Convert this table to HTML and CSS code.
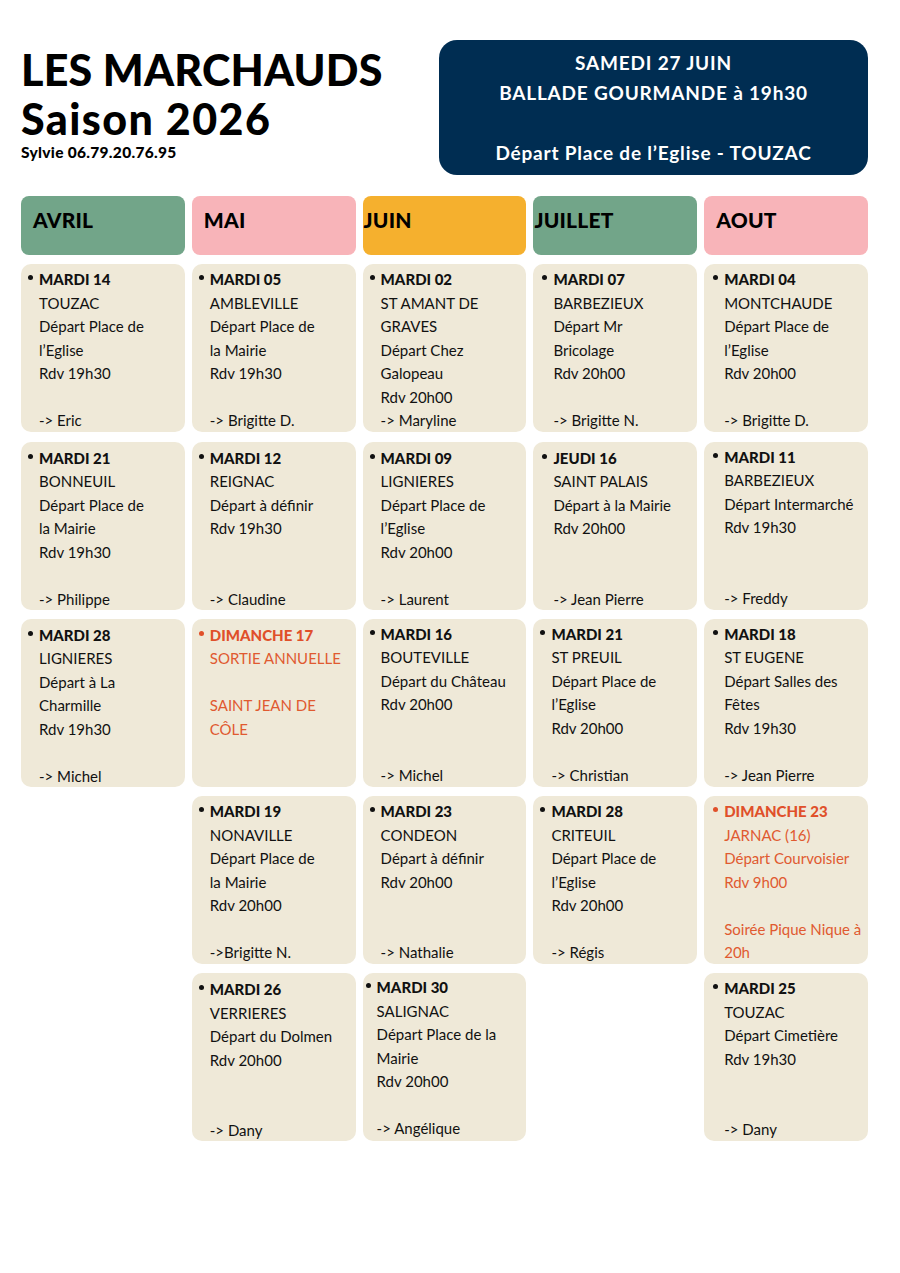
FILE: index.html
```html
<!DOCTYPE html>
<html lang="fr">
<head>
<meta charset="utf-8">
<title>Les Marchauds – Saison 2026</title>
<link rel="stylesheet" href="styles.css">
</head>
<body>
<div class="page">
  <header class="top">
    <div class="brand">
      <h1 class="title">LES MARCHAUDS<br><span class="season">Saison 2026</span></h1>
      <p class="contact">Sylvie 06.79.20.76.95</p>
    </div>
    <div class="promo">
      <p>SAMEDI 27 JUIN</p>
      <p>BALLADE GOURMANDE à 19h30</p>
      <p>&nbsp;</p>
      <p>Départ Place de l’Eglise - TOUZAC</p>
    </div>
  </header>

  <main class="grid">
    <div class="month green">AVRIL</div>
    <div class="month pink">MAI</div>
    <div class="month orange flush">JUIN</div>
    <div class="month green flush">JUILLET</div>
    <div class="month pink">AOUT</div>

    <!-- row 1 -->
    <div class="card"><p class="day">MARDI 14</p><p>TOUZAC</p><p>Départ Place de</p><p>l’Eglise</p><p>Rdv 19h30</p><p>&nbsp;</p><p>-&gt; Eric</p></div>
    <div class="card"><p class="day">MARDI 05</p><p>AMBLEVILLE</p><p>Départ Place de</p><p>la Mairie</p><p>Rdv 19h30</p><p>&nbsp;</p><p>-&gt; Brigitte D.</p></div>
    <div class="card"><p class="day">MARDI 02</p><p>ST AMANT DE</p><p>GRAVES</p><p>Départ Chez</p><p>Galopeau</p><p>Rdv 20h00</p><p>-&gt; Maryline</p></div>
    <div class="card wide"><p class="day">MARDI 07</p><p>BARBEZIEUX</p><p>Départ Mr</p><p>Bricolage</p><p>Rdv 20h00</p><p>&nbsp;</p><p>-&gt; Brigitte N.</p></div>
    <div class="card wide"><p class="day">MARDI 04</p><p>MONTCHAUDE</p><p>Départ Place de</p><p>l’Eglise</p><p>Rdv 20h00</p><p>&nbsp;</p><p>-&gt; Brigitte D.</p></div>

    <!-- row 2 -->
    <div class="card lower"><p class="day">MARDI 21</p><p>BONNEUIL</p><p>Départ Place de</p><p>la Mairie</p><p>Rdv 19h30</p><p>&nbsp;</p><p>-&gt; Philippe</p></div>
    <div class="card lower"><p class="day">MARDI 12</p><p>REIGNAC</p><p>Départ à définir</p><p>Rdv 19h30</p><p>&nbsp;</p><p>&nbsp;</p><p>-&gt; Claudine</p></div>
    <div class="card lower"><p class="day">MARDI 09</p><p>LIGNIERES</p><p>Départ Place de</p><p>l’Eglise</p><p>Rdv 20h00</p><p>&nbsp;</p><p>-&gt; Laurent</p></div>
    <div class="card lower wide"><p class="day">JEUDI 16</p><p>SAINT PALAIS</p><p>Départ à la Mairie</p><p>Rdv 20h00</p><p>&nbsp;</p><p>&nbsp;</p><p>-&gt; Jean Pierre</p></div>
    <div class="card wide"><p class="day">MARDI 11</p><p>BARBEZIEUX</p><p>Départ Intermarché</p><p>Rdv 19h30</p><p>&nbsp;</p><p>&nbsp;</p><p>-&gt; Freddy</p></div>

    <!-- row 3 -->
    <div class="card lower"><p class="day">MARDI 28</p><p>LIGNIERES</p><p>Départ à La</p><p>Charmille</p><p>Rdv 19h30</p><p>&nbsp;</p><p>-&gt; Michel</p></div>
    <div class="card lower special"><p class="day">DIMANCHE 17</p><p>SORTIE ANNUELLE</p><p>&nbsp;</p><p>SAINT JEAN DE</p><p>CÔLE</p></div>
    <div class="card"><p class="day">MARDI 16</p><p>BOUTEVILLE</p><p>Départ du Château</p><p>Rdv 20h00</p><p>&nbsp;</p><p>&nbsp;</p><p>-&gt; Michel</p></div>
    <div class="card"><p class="day">MARDI 21</p><p>ST PREUIL</p><p>Départ Place de</p><p>l’Eglise</p><p>Rdv 20h00</p><p>&nbsp;</p><p>-&gt; Christian</p></div>
    <div class="card wide"><p class="day">MARDI 18</p><p>ST EUGENE</p><p>Départ Salles des</p><p>Fêtes</p><p>Rdv 19h30</p><p>&nbsp;</p><p>-&gt; Jean Pierre</p></div>

    <!-- row 4 -->
    <div class="empty"></div>
    <div class="card"><p class="day">MARDI 19</p><p>NONAVILLE</p><p>Départ Place de</p><p>la Mairie</p><p>Rdv 20h00</p><p>&nbsp;</p><p>-&gt;Brigitte N.</p></div>
    <div class="card"><p class="day">MARDI 23</p><p>CONDEON</p><p>Départ à définir</p><p>Rdv 20h00</p><p>&nbsp;</p><p>&nbsp;</p><p>-&gt; Nathalie</p></div>
    <div class="card"><p class="day">MARDI 28</p><p>CRITEUIL</p><p>Départ Place de</p><p>l’Eglise</p><p>Rdv 20h00</p><p>&nbsp;</p><p>-&gt; Régis</p></div>
    <div class="card special wide"><p class="day">DIMANCHE 23</p><p>JARNAC (16)</p><p>Départ Courvoisier</p><p>Rdv 9h00</p><p>&nbsp;</p><p>Soirée Pique Nique à</p><p>20h</p></div>

    <!-- row 5 -->
    <div class="empty"></div>
    <div class="card lower"><p class="day">MARDI 26</p><p>VERRIERES</p><p>Départ du Dolmen</p><p>Rdv 20h00</p><p>&nbsp;</p><p>&nbsp;</p><p>-&gt; Dany</p></div>
    <div class="card tight"><p class="day">MARDI 30</p><p>SALIGNAC</p><p>Départ Place de la</p><p>Mairie</p><p>Rdv 20h00</p><p>&nbsp;</p><p>-&gt; Angélique</p></div>
    <div class="empty"></div>
    <div class="card wide"><p class="day">MARDI 25</p><p>TOUZAC</p><p>Départ Cimetière</p><p>Rdv 19h30</p><p>&nbsp;</p><p>&nbsp;</p><p>-&gt; Dany</p></div>
  </main>
</div>
</body>
</html>
```

FILE: styles.css
```css
* { box-sizing: border-box; }

html, body {
  margin: 0;
  padding: 0;
  background: #ffffff;
}

body {
  font-family: "Lato", "Liberation Sans", sans-serif;
  color: #111111;
}

p { margin: 0; }

.page {
  width: 900px;
  padding: 40px 32px 0 21px;
}

.top {
  display: flex;
  justify-content: space-between;
  align-items: flex-start;
  height: 156px;
}

.brand {
  padding-top: 5px;
}

.title {
  margin: 0;
  font-size: 43px;
  line-height: 49px;
  font-weight: 900;
  color: #000;
  letter-spacing: 0.2px;
}

.season {
  letter-spacing: 1.4px;
}

.contact {
  margin-top: 0;
  font-size: 15.5px;
  font-weight: 900;
  color: #000;
  letter-spacing: 0.3px;
}

.promo {
  width: 429px;
  height: 135px;
  background: #002d52;
  border-radius: 18px;
  color: #ffffff;
  font-weight: 700;
  font-size: 19px;
  line-height: 30px;
  letter-spacing: 0.8px;
  text-align: center;
  padding-top: 8px;
}

.grid {
  width: 847px;
  display: grid;
  grid-template-columns: repeat(5, 1fr);
  grid-template-rows: 59px 168px 168px 168px 168px 168px;
  column-gap: 7px;
  row-gap: 9.25px;
}

.month {
  border-radius: 8px;
  font-weight: 900;
  font-size: 21px;
  color: #000;
  padding: 11px 12px 0;
  letter-spacing: 0.2px;
}

.month.flush { padding-left: 1px; }

.green { background: #72a589; }
.pink { background: #f8b4b9; }
.orange { background: #f5b02e; }

.card {
  background: #efe9d8;
  border-radius: 10px;
  padding: 4px 6px 0 18px;
  font-size: 15px;
  line-height: 23.5px;
  color: #111;
  white-space: nowrap;
  overflow: hidden;
}

.card.lower { padding-top: 5px; }
.card.wide { padding-left: 20px; }
.card.tight { padding-left: 14px; padding-top: 3px; }

.day {
  font-weight: 900;
  position: relative;
}

.day::before {
  content: "";
  position: absolute;
  left: -11px;
  top: 7px;
  width: 5px;
  height: 5px;
  border-radius: 50%;
  background: currentColor;
}

.special { color: #e05a30; }
.special .day { color: #e0502a; }
```
